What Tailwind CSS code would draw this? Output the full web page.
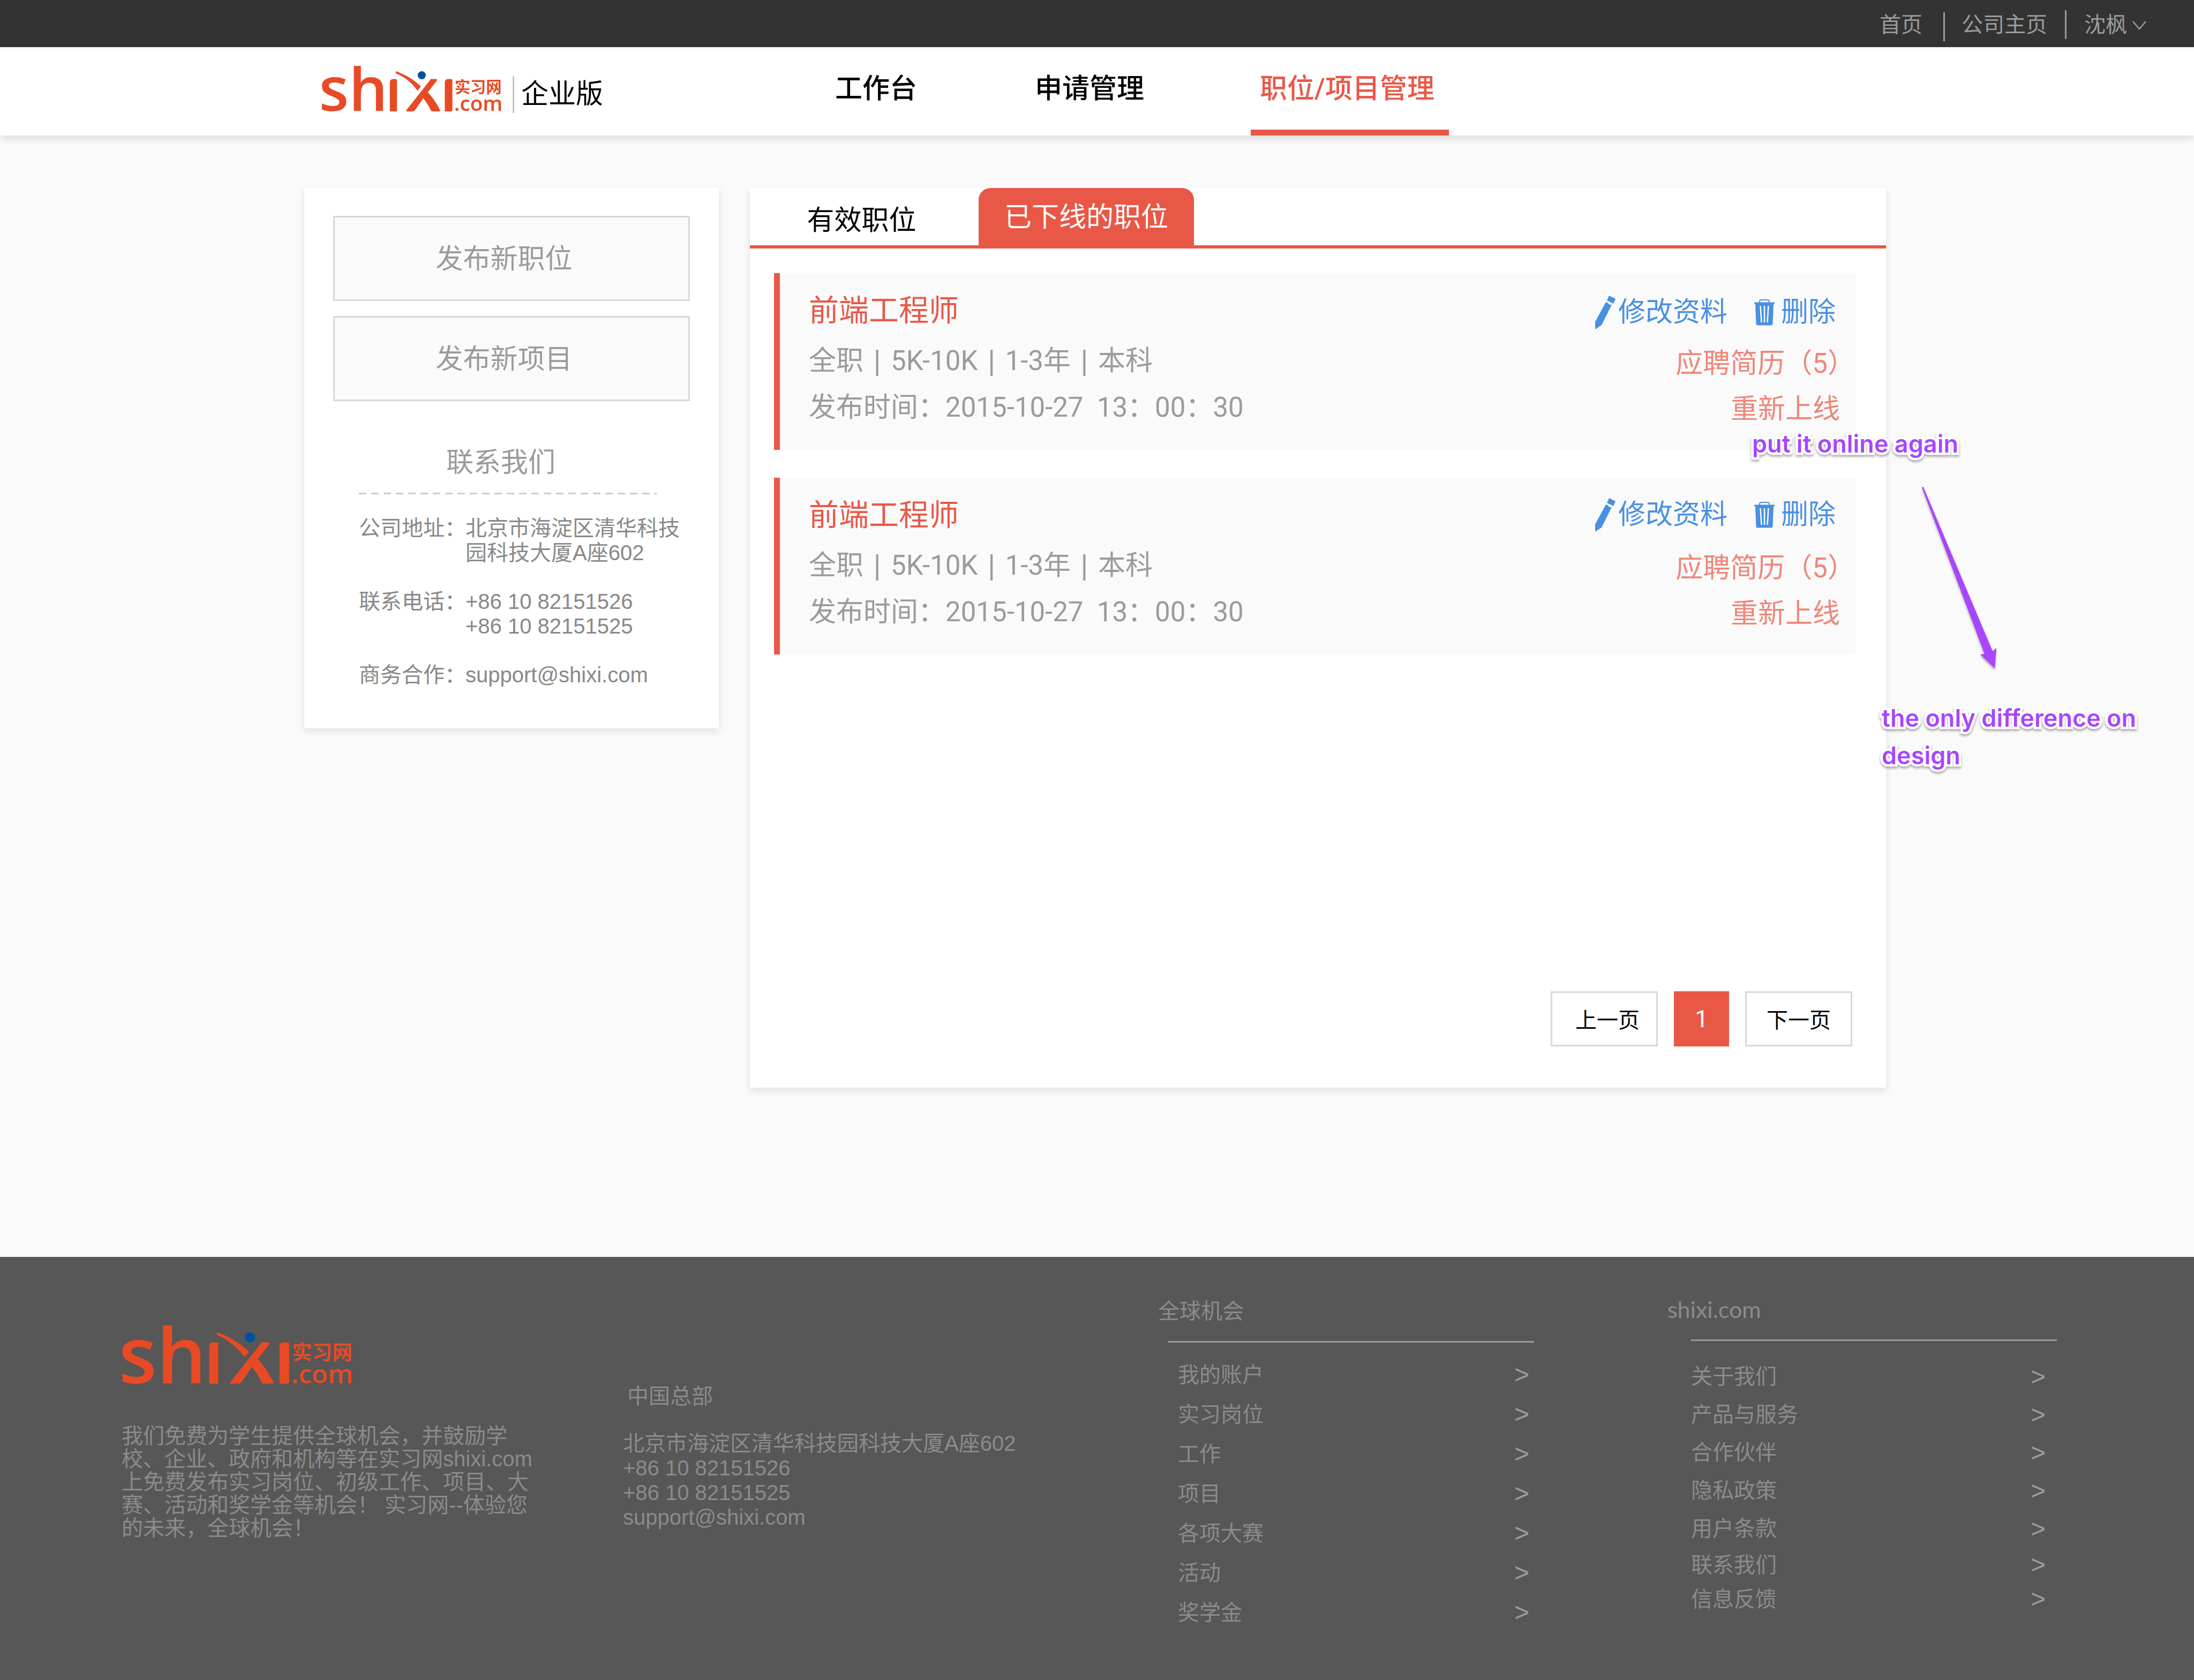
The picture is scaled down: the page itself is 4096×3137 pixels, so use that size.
<!DOCTYPE html>
<html lang="zh-CN">
<head>
<meta charset="utf-8">
<title>实习网 企业版 - 职位/项目管理</title>
<script src="https://cdn.jsdelivr.net/npm/@tailwindcss/browser@4"></script>
</head>
<body class="min-h-screen flex flex-col bg-[#fafafa] text-black font-['Liberation_Sans','Noto_Sans_CJK_SC',sans-serif]">

<svg class="hidden" aria-hidden="true">
  <symbol id="logo" viewBox="0 0 355 91">
    <g fill="#e84a25" font-family="'Open Sans','Noto Sans CJK SC',sans-serif">
      <text x="-5" y="89" font-size="121" font-weight="600">sh</text>
      <path d="M135 90V33q0-7 7-7h4q3 0 3 3v61z"/>
      <path d="M243.500 90V33q0-7 7-7h5q3 0 3 3v58q0 3-3 3z"/>
      <path d="M146.500 12q1-2 3-1q31 13 47 30l-7 8q-17-24-42-34q-1.500-1.500-1-3z"/>
      <path d="M217 26h9q3 0 2 3l-18 23q14 15 24 35q1 3-2 3h-12q-3 0-4-2q-6-13-15-24l-16 23q-2 3-5 3h-11q-3 0-1-3l45-57q2-4 4-4z"/>
      <text x="263" y="53" font-size="31" font-weight="700">实习网</text>
      <text x="262" y="89" font-size="41" font-weight="600">.com</text>
    </g>
    <circle cx="198" cy="18.500" r="8" fill="#00539b"/>
  </symbol>
  <symbol id="pencil" viewBox="0 0 39 63">
    <path fill="#4a90e2" d="M26 0 38 6 34 15 22 9zM20 12 23 13 27 17 31 17 12 55 0 63 0 49z"/>
  </symbol>
  <symbol id="trash" viewBox="0 0 38 49">
    <path fill="none" stroke="#4a90e2" stroke-width="2" d="M10 7V4q0-3 3-3h12q3 0 3 3v3"/>
    <path fill="#4a90e2" d="M0 5.500h38v3h-2l-1.500 37q0 3-3 3h-25q-3 0-3-3L2 8.500H0z"/>
    <path stroke="#fafafa" stroke-width="2.500" d="M11.500 12l2 31M19 12v31M26.500 12l-2 31"/>
  </symbol>
</svg>

<div class="h-[88px] bg-[#333] flex items-center justify-end pt-[3px] pr-[89px] text-[40px] text-[#9b9b9b]">
  <a href="#">首页</a>
  <span class="ml-[39px] mr-[31px] mt-2 w-[3px] h-[54px] bg-[#9b9b9b]"></span>
  <a href="#">公司主页</a>
  <span class="ml-[33px] mr-[33px] w-[3px] h-[54px] bg-[#9b9b9b]"></span>
  <button type="button" class="flex items-center gap-[10px]">沈枫
    <svg class="w-[26px] h-[17px] mt-1" viewBox="0 0 26 17" fill="none" stroke="#9b9b9b" stroke-width="2.500"><path d="M1 1l12 14L25 1"/></svg>
  </button>
</div>

<header class="h-[165px] border-t-[6px] border-[#f9f9f9] bg-white flex pl-[600px] shadow-[0_6px_14px_rgba(0,0,0,0.12)]">
  <a href="#" class="flex items-end pb-[42px]">
    <svg class="w-[336px] h-[86px] mb-[2px]" role="img" aria-label="shixi.com 实习网"><use href="#logo"/></svg>
    <span class="ml-[21px] w-[3px] h-[69px] bg-[#c4c4c4]"></span>
    <span class="ml-[13px] text-[51px] leading-[70px]">企业版</span>
  </a>
  <nav class="ml-[412px] flex gap-[178px] text-[51px] font-medium">
    <a href="#" class="flex items-center px-[21px] pb-1 border-b-[11px] border-transparent">工作台</a>
    <a href="#" class="flex items-center px-[21px] pb-1 border-b-[11px] border-transparent">申请管理</a>
    <a href="#" aria-current="page" class="flex items-center pl-[17px] pr-[27px] pb-1 border-b-[11px] border-[#e95847] text-[#e95847] font-['Roboto','Noto_Sans_CJK_SC',sans-serif]">职位/项目管理</a>
  </nav>
</header>

<main class="flex items-start gap-[58px] pl-[568px] pr-[575px] pt-[97px] pb-[316px]">
  <aside class="w-[774px] shrink-0 bg-white pt-[53px] px-[54px] pb-[77px] shadow-[0_6px_14px_rgba(0,0,0,0.1)]">
    <div class="flex flex-col gap-[28px] text-[51px] text-[#9b9b9b]">
      <button type="button" class="h-[159px] pt-[3px] bg-[#fafafa] border-[3px] border-[#d8d8d8] pr-7">发布新职位</button>
      <button type="button" class="h-[159px] pt-[3px] bg-[#fafafa] border-[3px] border-[#d8d8d8] pr-7">发布新项目</button>
    </div>
    <h2 class="mt-[73px] pr-[40px] text-center text-[51px] leading-[84px] text-[#9b9b9b]">联系我们</h2>
    <div class="mt-[14px] ml-12 mr-[62px] h-[3px] bg-[repeating-linear-gradient(90deg,#ccc_0_14px,transparent_14px_23px)]"></div>
    <dl class="mt-[40px] ml-12 -mr-2 grid grid-cols-[199px_1fr] gap-y-[45px] text-[40px] leading-[46px] text-[#888] whitespace-nowrap">
      <dt>公司地址：</dt><dd>北京市海淀区清华科技<br>园科技大厦A座602</dd>
      <dt>联系电话：</dt><dd>+86 10 82151526<br>+86 10 82151525</dd>
      <dt>商务合作：</dt><dd>support@shixi.com</dd>
    </dl>
  </aside>

  <section class="relative grow min-h-[1681px] flex flex-col bg-white shadow-[0_6px_14px_rgba(0,0,0,0.1)]">
    <div class="h-[114px] pt-px flex items-stretch border-b-[6px] border-[#e95847] text-[51px]">
      <button type="button" class="w-[427px] pt-4 pr-[10px]">有效职位</button>
      <button type="button" class="w-[402px] pt-[3px] rounded-t-[22px] bg-[#e95847] text-white">已下线的职位</button>
    </div>

    <ul class="mt-[46px] ml-[45px] mr-[57px] flex flex-col gap-[52px] text-[51px] font-['Roboto','Noto_Sans_CJK_SC',sans-serif]">
      <li class="h-[330px] flex justify-between bg-[#fafafa] border-l-[11px] border-[#e95847] pl-[54px] pr-[29px]">
        <div class="pt-[28px] text-[#9b9b9b]">
          <h3 class="text-[56px] leading-[84px] text-[#e95847]">前端工程师</h3>
          <p class="mt-[8px] leading-[87px]">全职<span class="inline-block w-[51px] text-center font-['Liberation_Sans']">|</span>5K-10K<span class="inline-block w-[51px] text-center font-['Liberation_Sans']">|</span>1-3年<span class="inline-block w-[51px] text-center font-['Liberation_Sans']">|</span>本科</p>
          <p class="leading-[87px] whitespace-pre">发布时间：2015-10-27  13：00：30</p>
        </div>
        <div class="pt-[31px] flex flex-col items-end text-[#ef8679]">
          <div class="h-[84px] mb-[11px] mr-2 flex items-center gap-[50px] text-[#4a90e2]">
            <a href="#" class="flex items-center gap-1"><svg class="w-[39px] h-[63px]" aria-hidden="true"><use href="#pencil"/></svg>修改资料</a>
            <a href="#" class="flex items-center gap-3"><svg class="w-[38px] h-[49px]" aria-hidden="true"><use href="#trash"/></svg>删除</a>
          </div>
          <a href="#" class="-mr-7 leading-[85px]">应聘简历（5）</a>
          <a href="#" class="leading-[85px]">重新上线</a>
        </div>
      </li>
      <li class="h-[330px] flex justify-between bg-[#fafafa] border-l-[11px] border-[#e95847] pl-[54px] pr-[29px]">
        <div class="pt-[28px] text-[#9b9b9b]">
          <h3 class="text-[56px] leading-[84px] text-[#e95847]">前端工程师</h3>
          <p class="mt-[8px] leading-[87px]">全职<span class="inline-block w-[51px] text-center font-['Liberation_Sans']">|</span>5K-10K<span class="inline-block w-[51px] text-center font-['Liberation_Sans']">|</span>1-3年<span class="inline-block w-[51px] text-center font-['Liberation_Sans']">|</span>本科</p>
          <p class="leading-[87px] whitespace-pre">发布时间：2015-10-27  13：00：30</p>
        </div>
        <div class="pt-[27px] flex flex-col items-end text-[#ef8679]">
          <div class="h-[84px] mb-[15px] mr-2 flex items-center gap-[50px] text-[#4a90e2]">
            <a href="#" class="flex items-center gap-1"><svg class="w-[39px] h-[63px]" aria-hidden="true"><use href="#pencil"/></svg>修改资料</a>
            <a href="#" class="flex items-center gap-3"><svg class="w-[38px] h-[49px]" aria-hidden="true"><use href="#trash"/></svg>删除</a>
          </div>
          <a href="#" class="-mr-7 leading-[85px]">应聘简历（5）</a>
          <a href="#" class="leading-[85px]">重新上线</a>
        </div>
      </li>
    </ul>

    <div class="mt-auto mb-[77px] mr-[63px] flex justify-end gap-[30px] text-[40px]">
      <button type="button" class="w-[200px] h-[103px] pl-3 pt-1 border-[3px] border-[#d8d8d8]">上一页</button>
      <button type="button" aria-current="page" class="w-[103px] h-[103px] bg-[#e95847] text-white text-[44px] font-['Roboto',sans-serif]">1</button>
      <button type="button" class="w-[200px] h-[103px] pt-1 border-[3px] border-[#d8d8d8]">下一页</button>
    </div>

    <!-- Review notes over the page -->
    <div class="absolute top-0 right-0 text-[#a845ff] text-[45px] leading-[70px] font-semibold font-['Inter',sans-serif] whitespace-nowrap [-webkit-text-stroke:9px_white] [paint-order:stroke_fill] drop-shadow-[0_3px_2px_rgba(0,0,0,0.35)]">
      <p class="absolute top-[444px] left-[-250px]">put it online again</p>
      <svg class="absolute top-[558px] left-[66px] w-[142px] h-[342px]" viewBox="0 0 142 342" fill="#a845ff" aria-hidden="true"><path d="M1 2q2-2 3 0L133 308 140 302 137 340 110 314 118 313z"/></svg>
      <p class="absolute top-[956px] left-[-8px]">the only difference on<br>design</p>
    </div>
  </section>
</main>

<footer class="grow bg-[#575757] text-[#8b8b8b] text-[40px] pl-[227px] pr-[256px] pb-[89px] grid grid-cols-[936fr_999fr_951fr_727fr]">
  <div class="pt-[128px]">
    <svg class="w-[430px] h-[110px]" role="img" aria-label="shixi.com 实习网"><use href="#logo"/></svg>
    <p class="mt-[75px] leading-[43px] whitespace-nowrap">我们免费为学生提供全球机会，并鼓励学<br>校、企业、政府和机构等在实习网shixi.com<br>上免费发布实习岗位、初级工作、项目、大<br>赛、活动和奖学金等机会！ 实习网--体验您<br>的未来，全球机会！</p>
  </div>
  <address class="not-italic pt-[237px] leading-[46px] whitespace-nowrap">
    <h2 class="pl-2 mb-[42px]">中国总部</h2>
    北京市海淀区清华科技园科技大厦A座602<br>+86 10 82151526<br>+86 10 82151525<br>support@shixi.com
  </address>
  <nav class="pt-[78px]">
    <h2 class="leading-[46px]">全球机会</h2>
    <ul class="ml-[19px] w-[683px] mt-[33px] border-t-[3px] border-[#9b9b9b] pt-[23px] pl-[18px] pr-[9px] leading-[74px]">
      <li><a href="#" class="flex justify-between">我的账户<span class="text-[48px] text-[#9b9b9b]">&gt;</span></a></li>
      <li><a href="#" class="flex justify-between">实习岗位<span class="text-[48px] text-[#9b9b9b]">&gt;</span></a></li>
      <li><a href="#" class="flex justify-between">工作<span class="text-[48px] text-[#9b9b9b]">&gt;</span></a></li>
      <li><a href="#" class="flex justify-between">项目<span class="text-[48px] text-[#9b9b9b]">&gt;</span></a></li>
      <li><a href="#" class="flex justify-between">各项大赛<span class="text-[48px] text-[#9b9b9b]">&gt;</span></a></li>
      <li><a href="#" class="flex justify-between">活动<span class="text-[48px] text-[#9b9b9b]">&gt;</span></a></li>
      <li><a href="#" class="flex justify-between">奖学金<span class="text-[48px] text-[#9b9b9b]">&gt;</span></a></li>
    </ul>
  </nav>
  <nav class="pt-[75px]">
    <h2 class="leading-[46px] text-[43px] font-['Lato',sans-serif]">shixi.com</h2>
    <div class="ml-[44px] w-[683px] mt-[33px] border-t-[3px] border-[#9b9b9b] pt-[31px] pr-[21px]">
      <ul class="leading-[71px]">
        <li><a href="#" class="flex justify-between">关于我们<span class="text-[48px] text-[#9b9b9b]">&gt;</span></a></li>
        <li><a href="#" class="flex justify-between">产品与服务<span class="text-[48px] text-[#9b9b9b]">&gt;</span></a></li>
        <li><a href="#" class="flex justify-between">合作伙伴<span class="text-[48px] text-[#9b9b9b]">&gt;</span></a></li>
        <li><a href="#" class="flex justify-between">隐私政策<span class="text-[48px] text-[#9b9b9b]">&gt;</span></a></li>
        <li><a href="#" class="flex justify-between">用户条款<span class="text-[48px] text-[#9b9b9b]">&gt;</span></a></li>
      </ul>
      <ul class="leading-[64px]">
        <li><a href="#" class="flex justify-between">联系我们<span class="text-[48px] text-[#9b9b9b]">&gt;</span></a></li>
        <li><a href="#" class="flex justify-between">信息反馈<span class="text-[48px] text-[#9b9b9b]">&gt;</span></a></li>
      </ul>
    </div>
  </nav>
</footer>
</body>
</html>
